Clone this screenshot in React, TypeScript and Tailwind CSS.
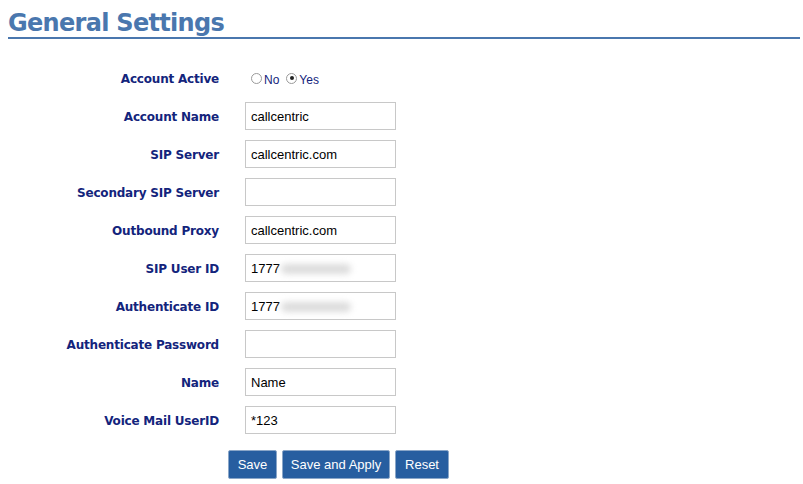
import React from "react";

const font = { fontFamily: "Tahoma, 'DejaVu Sans', Verdana, sans-serif" };
const arial = { fontFamily: "'Liberation Sans', Arial, sans-serif" };

type Row = { label: string; value?: string; blurred?: boolean };

const rows: Row[] = [
  { label: "Account Name", value: "callcentric" },
  { label: "SIP Server", value: "callcentric.com" },
  { label: "Secondary SIP Server", value: "" },
  { label: "Outbound Proxy", value: "callcentric.com" },
  { label: "SIP User ID", value: "1777", blurred: true },
  { label: "Authenticate ID", value: "1777", blurred: true },
  { label: "Authenticate Password", value: "" },
  { label: "Name", value: "Name" },
  { label: "Voice Mail UserID", value: "*123" },
];

const buttons = [
  { text: "Save", w: "w-[49px]" },
  { text: "Save and Apply", w: "w-[108px]" },
  { text: "Reset", w: "w-[54px]" },
];

function Radio({ checked }: { checked?: boolean }) {
  return (
    <span className="inline-flex h-[11px] w-[11px] items-center justify-center rounded-full border border-[#9a9a9a] bg-white">
      {checked && <span className="h-[4px] w-[4px] rounded-full bg-[#222]" />}
    </span>
  );
}

export default function App() {
  return (
    <div className="h-[484px] w-[803px] bg-white" style={font}>
      <div className="ml-2 mr-[3px] h-[39px] border-b-2 border-[#4a77ae]">
        <h1 className="pt-[9px] text-[24px] leading-[28px] font-bold tracking-[-0.7px] text-[#4a77ae]">
          General Settings
        </h1>
      </div>

      <div className="mt-[20px] grid grid-cols-[219px_1fr] gap-x-[26px]">
        <div className="flex h-[38px] items-center justify-end pt-[2px] text-[12px] font-bold tracking-[-0.2px] text-[#13247c]">
          Account Active
        </div>
        <div
          className="flex h-[38px] items-center gap-[2px] pl-[6px] text-[12px] text-[#13247c]"
          style={arial}
        >
          <Radio />
          <span className="mt-[3px] mr-[5px]">No</span>
          <Radio checked />
          <span className="mt-[3px]">Yes</span>
        </div>

        {rows.map((r) => (
          <React.Fragment key={r.label}>
            <div className="flex h-[38px] items-center justify-end pt-[2px] text-[12px] font-bold tracking-[-0.2px] text-[#13247c]">
              {r.label}
            </div>
            <div className="flex h-[38px] items-center">
              <div
                className="flex h-[28px] w-[151px] items-center border border-[#c8c8c8] bg-white pt-[2px] pl-[5px] text-[13px] text-black"
                style={arial}
              >
                <span>{r.value}</span>
                {r.blurred && (
                  <span className="ml-[1px] h-[10px] w-[70px] rounded-full bg-[#dcdcdc] blur-[3px]" />
                )}
              </div>
            </div>
          </React.Fragment>
        ))}
      </div>

      <div className="mt-[11px] flex gap-[5px] pl-[228px]">
        {buttons.map((b) => (
          <button
            key={b.text}
            className={`${b.w} h-[29px] rounded-[2px] border border-[#8aa6c8] bg-[#275ea0] text-[13px] text-white`}
            style={arial}
          >
            {b.text}
          </button>
        ))}
      </div>
    </div>
  );
}
